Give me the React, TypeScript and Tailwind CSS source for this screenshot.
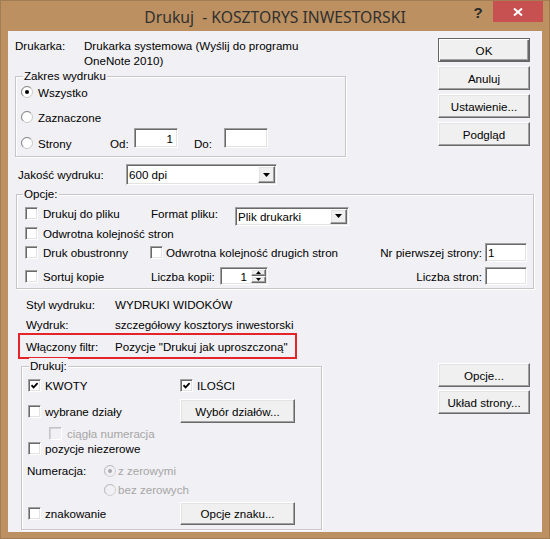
import React from "react";

const sunken =
  "border border-t-[#a0a0a0] border-l-[#a0a0a0] border-b-white border-r-white shadow-[inset_1px_1px_0_#696969,inset_-1px_-1px_0_#e3e3e3]";
const raised =
  "border border-t-white border-l-white border-b-[#696969] border-r-[#696969] shadow-[inset_-1px_-1px_0_#a0a0a0,inset_1px_1px_0_#e3e3e3]";

type Kids = { children?: React.ReactNode; className?: string };

function Btn({ children, className = "", def = false }: Kids & { def?: boolean }) {
  return (
    <div
      className={`flex items-center justify-center bg-[#f0f0f0] ${
        def
          ? "border border-[#646464] shadow-[inset_1px_1px_0_#fff,inset_-1px_-1px_0_#696969,inset_-2px_-2px_0_#a0a0a0]"
          : raised
      } ${className}`}
    >
      {children}
    </div>
  );
}

function Check({ checked = false, disabled = false }: { checked?: boolean; disabled?: boolean }) {
  return (
    <div
      className={`w-[13px] h-[13px] shrink-0 flex items-center justify-center ${
        disabled
          ? "bg-[#f1f0f4] border border-t-[#c4c4c4] border-l-[#c4c4c4] border-b-white border-r-white shadow-[inset_1px_1px_0_#d6d6d6]"
          : "bg-white " + sunken
      }`}
    >
      {checked && (
        <svg width="7" height="7" viewBox="0 0 7 7">
          <path d="M0.5 3.2 L2.6 5.4 L6.6 1.2" fill="none" stroke="#000" strokeWidth="1.7" />
        </svg>
      )}
    </div>
  );
}

function Radio({ checked = false, disabled = false }: { checked?: boolean; disabled?: boolean }) {
  return (
    <svg width="12" height="12" viewBox="0 0 12 12" className="shrink-0">
      <circle cx="6" cy="6" r="5.5" fill={disabled ? "#f1f0f4" : "#fff"} stroke={disabled ? "#d0d0d0" : "#c8c8c8"} />
      <path
        d="M2.11 9.89 A5.5 5.5 0 0 1 9.89 2.11"
        fill="none"
        stroke={disabled ? "#c0c0c0" : "#8a8a8a"}
        strokeWidth="1"
      />
      {checked && <circle cx="6" cy="6" r="2" fill={disabled ? "#a8a8a8" : "#000"} />}
    </svg>
  );
}

function Group({ label, className = "", labelLeft = "left-[7px]", children }: Kids & { label: string; labelLeft?: string }) {
  return (
    <div className={`relative flex flex-col border border-[#c6c6c6] shadow-[1px_1px_0_#fff,inset_1px_1px_0_#fff] ${className}`}>
      <span className={`absolute -top-[9px] ${labelLeft} px-[1px] bg-[#f1f0f4] leading-[15px]`}>{label}</span>
      {children}
    </div>
  );
}

function Select({ value, className = "" }: { value: string; className?: string }) {
  return (
    <div className={`flex items-stretch bg-white ${sunken} ${className}`}>
      <div className="flex-1 pl-[2px] flex items-center">{value}</div>
      <div className={`w-[17px] m-[1px] flex items-center justify-center bg-[#f0f0f0] ${raised}`}>
        <svg width="7" height="4" viewBox="0 0 7 4">
          <path d="M0 0 H7 L3.5 4 Z" fill="#000" />
        </svg>
      </div>
    </div>
  );
}

function TextBox({ value = "", className = "", right = false }: { value?: string; className?: string; right?: boolean }) {
  return (
    <div className={`flex items-center bg-white ${sunken} ${right ? "justify-end pr-[4px]" : "pl-[2px]"} ${className}`}>
      {value}
    </div>
  );
}

function Spinner() {
  return (
    <div className={`w-[48px] h-[18px] flex bg-white ${sunken}`}>
      <div className="flex-1 flex items-center justify-end pr-[3px]">1</div>
      <div className="w-[15px] flex flex-col m-[1px]">
        <div className={`flex-1 flex items-center justify-center bg-[#f0f0f0] ${raised}`}>
          <svg width="5" height="3" viewBox="0 0 5 3">
            <path d="M0 3 H5 L2.5 0 Z" fill="#000" />
          </svg>
        </div>
        <div className={`flex-1 flex items-center justify-center bg-[#f0f0f0] ${raised}`}>
          <svg width="5" height="3" viewBox="0 0 5 3">
            <path d="M0 0 H5 L2.5 3 Z" fill="#000" />
          </svg>
        </div>
      </div>
    </div>
  );
}

export default function App() {
  return (
    <div className="w-[550px] h-[539px] flex flex-col bg-[#bc9060] border border-[#a27c52] font-['Liberation_Sans',Arial,sans-serif] text-[11.6px] leading-[15px] text-black select-none">
      {/* Title bar */}
      <div className="h-[30px] shrink-0 grid grid-cols-[1fr_auto_1fr]">
        <div />
        <div className="flex items-center pt-[2px] font-['Noto_Sans',sans-serif] text-[15.7px] text-[#303030] whitespace-pre">
          Drukuj  - KOSZTORYS INWESTORSKI
        </div>
        <div className="flex justify-end items-start pr-[6px]">
          <div className="w-[26px] h-[22px] flex items-center justify-center pr-[4px] font-bold text-[15px] text-[#2a2a2a]">?</div>
          <div className="w-[50px] h-[21px] bg-[#c75050] flex items-center justify-center">
            <svg width="10" height="8" viewBox="0 0 10 8">
              <path d="M1 0.5 L9 7.5 M9 0.5 L1 7.5" stroke="#fff" strokeWidth="2" />
            </svg>
          </div>
        </div>
      </div>

      {/* Client area */}
      <div className="flex-1 mx-[7px] mb-[6px] bg-[#f1f0f4] flex flex-col pl-[7px] pr-[8px]">
        {/* Section A */}
        <div className="flex justify-between">
          <div className="w-[331px] flex flex-col">
            <div className="mt-[7px] flex">
              <div className="w-[69px]">Drukarka:</div>
              <div>
                Drukarka systemowa (Wyślij do programu
                <br />
                OneNote 2010)
              </div>
            </div>
            <Group label="Zakres wydruku" className="mt-[8px] h-[81px] pl-[5px]">
              <div className="mt-[7px] h-[16px] flex items-center">
                <Radio checked />
                <span className="ml-[5px]">Wszystko</span>
              </div>
              <div className="mt-[9px] h-[16px] flex items-center">
                <Radio />
                <span className="ml-[5px]">Zaznaczone</span>
              </div>
              <div className="mt-[3px] h-[20px] flex items-center">
                <div className="w-[89px] mt-[10px] flex items-center">
                  <Radio />
                  <span className="ml-[5px]">Strony</span>
                </div>
                <div className="w-[24px] mt-[10px]">Od:</div>
                <TextBox value="1" right className="w-[44px] h-[20px]" />
                <div className="ml-[16px] w-[30px] mt-[10px]">Do:</div>
                <TextBox className="w-[44px] h-[20px]" />
              </div>
            </Group>
          </div>
          <div className="w-[92px] mt-[7px] mr-[4px] flex flex-col gap-[4px]">
            <Btn def className="h-[24px]">OK</Btn>
            <Btn className="h-[24px]">Anuluj</Btn>
            <Btn className="h-[24px]">Ustawienie...</Btn>
            <Btn className="h-[24px]">Podgląd</Btn>
          </div>
        </div>

        {/* Section B */}
        <div className="mt-[7px] h-[21px] flex items-center">
          <div className="w-[111px] pl-[3px]">Jakość wydruku:</div>
          <Select value="600 dpi" className="w-[151px] h-[21px]" />
        </div>

        {/* Section C */}
        <Group label="Opcje:" labelLeft="left-[6px]" className="ml-[1px] mt-[9px] h-[95px] pl-[8px] pr-[6px]">
          <div className="mt-[8px] h-[20px] flex items-center">
            <div className="w-[125px] flex items-center">
              <Check />
              <span className="ml-[5px]">Drukuj do pliku</span>
            </div>
            <div className="w-[84px] ml-[1px]">Format pliku:</div>
            <Select value="Plik drukarki" className="w-[114px] h-[19px] mt-[6px]" />
          </div>
          <div className="h-[20px] flex items-center">
            <Check />
            <span className="ml-[5px]">Odwrotna kolejność stron</span>
          </div>
          <div className="-mt-px h-[20px] flex items-center">
            <div className="w-[125px] flex items-center">
              <Check />
              <span className="ml-[5px]">Druk obustronny</span>
            </div>
            <Check />
            <span className="ml-[3px]">Odwrotna kolejność drugich stron</span>
            <div className="flex-1" />
            <span>Nr pierwszej strony:</span>
            <TextBox value="1" className="ml-[3px] w-[42px] h-[19px] mt-[1px]" />
          </div>
          <div className="mt-[4px] h-[20px] flex items-center">
            <div className="w-[125px] flex items-center">
              <Check />
              <span className="ml-[5px]">Sortuj kopie</span>
            </div>
            <div className="w-[69px] ml-[1px]">Liczba kopii:</div>
            <Spinner />
            <div className="flex-1" />
            <span>Liczba stron:</span>
            <TextBox className="ml-[3px] w-[42px] h-[18px]" />
          </div>
        </Group>

        {/* Section D */}
        <div className="flex justify-between">
          <div className="flex flex-col">
            <div className="mt-[8px] flex pl-[11px]">
              <div className="w-[89px]">Styl wydruku:</div>
              <div>WYDRUKI WIDOKÓW</div>
            </div>
            <div className="mt-[5px] flex pl-[11px]">
              <div className="w-[89px]">Wydruk:</div>
              <div>szczegółowy kosztorys inwestorski</div>
            </div>
            <div className="mt-[1px] ml-[3px] w-[279px] h-[26px] border-2 border-[#e3242b] pt-[4px] pl-[6px] flex">
              <div className="w-[89px]">Włączony filtr:</div>
              <div>Pozycje "Drukuj jak uproszczoną"</div>
            </div>
            <Group label="Drukuj:" className="mt-[7px] ml-[6px] w-[301px] h-[164px] pl-[6px]">
              <div className="mt-[8px] h-[20px] flex items-center">
                <div className="w-[152px] flex items-center">
                  <Check checked />
                  <span className="ml-[4px]">KWOTY</span>
                </div>
                <Check checked />
                <span className="ml-[4px]">ILOŚCI</span>
              </div>
              <div className="mt-[4px] h-[24px] flex items-center">
                <div className="w-[152px] flex items-center">
                  <Check />
                  <span className="ml-[4px]">wybrane działy</span>
                </div>
                <Btn className="w-[115px] h-[24px]">Wybór działów...</Btn>
              </div>
              <div className="mt-[3px] h-[15px] flex items-center pl-[21px]">
                <Check disabled />
                <span className="ml-[5px] text-[#a6a6a6]">ciągła numeracja</span>
              </div>
              <div className="h-[15px] flex items-center">
                <Check />
                <span className="ml-[4px]">pozycje niezerowe</span>
              </div>
              <div className="mt-[7px] h-[15px] flex items-center">
                <div className="w-[77px] -ml-[1px]">Numeracja:</div>
                <Radio checked disabled />
                <span className="ml-[2px] text-[#a6a6a6]">z zerowymi</span>
              </div>
              <div className="mt-[4px] h-[15px] flex items-center pl-[76px]">
                <Radio disabled />
                <span className="ml-[2px] text-[#a6a6a6]">bez zerowych</span>
              </div>
              <div className="mt-[5px] h-[23px] flex items-center">
                <div className="w-[152px] flex items-center">
                  <Check />
                  <span className="ml-[4px]">znakowanie</span>
                </div>
                <Btn className="w-[115px] h-[23px]">Opcje znaku...</Btn>
              </div>
            </Group>
          </div>
          <div className="w-[92px] mt-[74px] mr-[4px] flex flex-col gap-[3px]">
            <Btn className="h-[24px]">Opcje...</Btn>
            <Btn className="h-[24px]">Układ strony...</Btn>
          </div>
        </div>
      </div>
    </div>
  );
}
